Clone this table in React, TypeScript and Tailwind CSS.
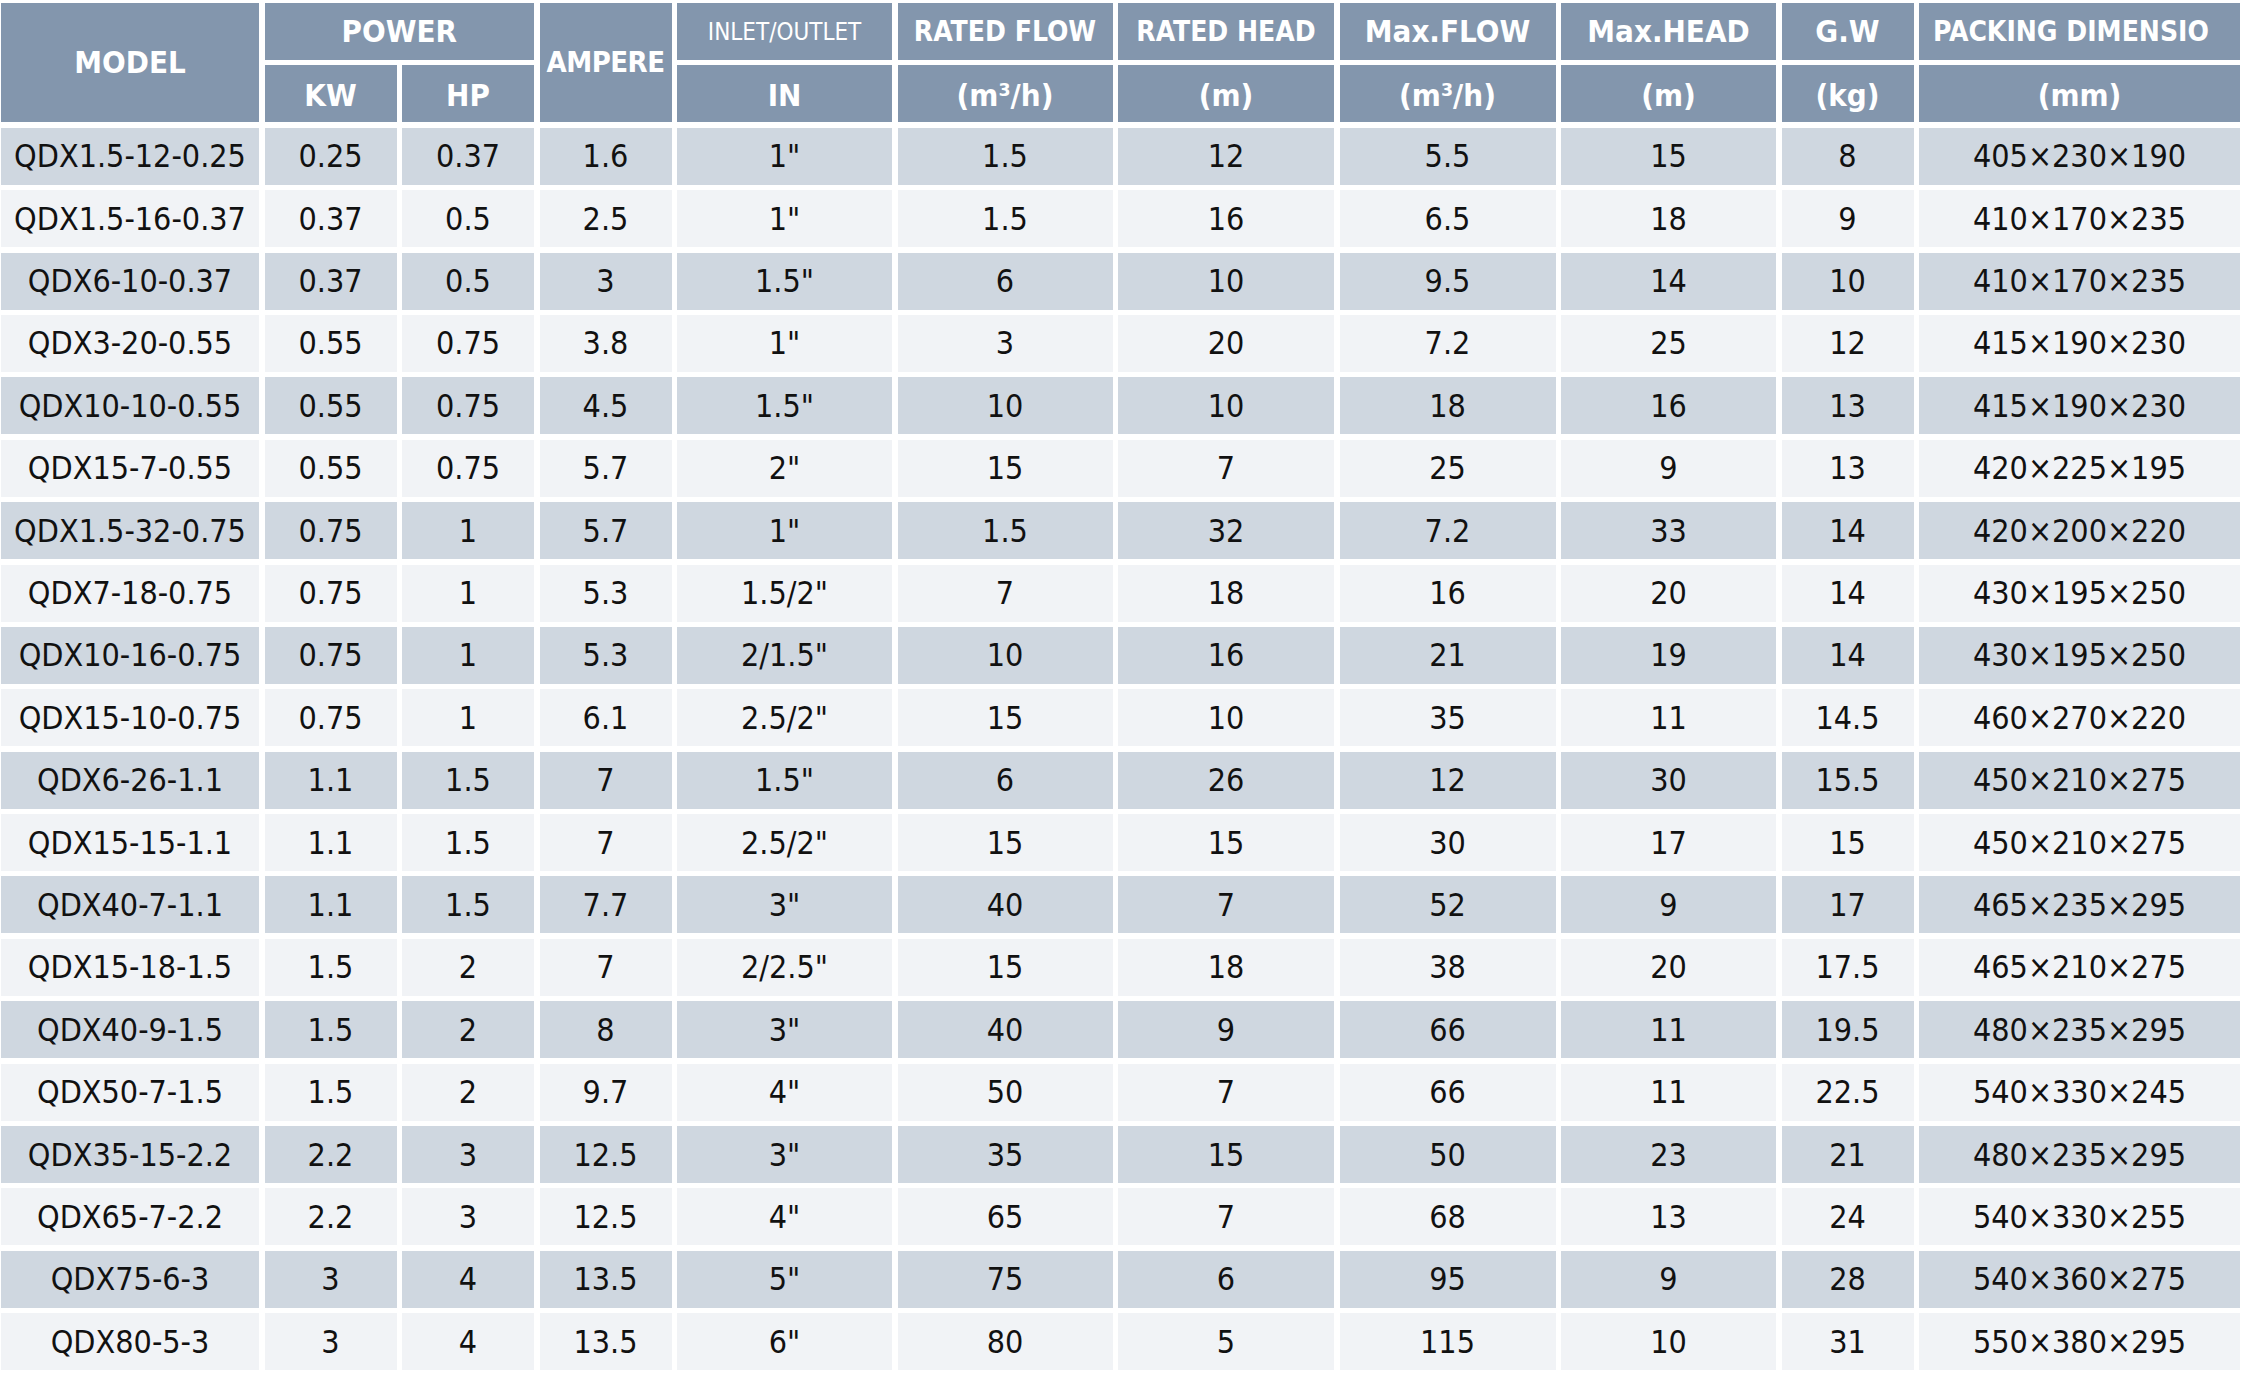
import React from "react";

const rows: string[][] = [
  ["QDX1.5-12-0.25", "0.25", "0.37", "1.6", '1"', "1.5", "12", "5.5", "15", "8", "405×230×190"],
  ["QDX1.5-16-0.37", "0.37", "0.5", "2.5", '1"', "1.5", "16", "6.5", "18", "9", "410×170×235"],
  ["QDX6-10-0.37", "0.37", "0.5", "3", '1.5"', "6", "10", "9.5", "14", "10", "410×170×235"],
  ["QDX3-20-0.55", "0.55", "0.75", "3.8", '1"', "3", "20", "7.2", "25", "12", "415×190×230"],
  ["QDX10-10-0.55", "0.55", "0.75", "4.5", '1.5"', "10", "10", "18", "16", "13", "415×190×230"],
  ["QDX15-7-0.55", "0.55", "0.75", "5.7", '2"', "15", "7", "25", "9", "13", "420×225×195"],
  ["QDX1.5-32-0.75", "0.75", "1", "5.7", '1"', "1.5", "32", "7.2", "33", "14", "420×200×220"],
  ["QDX7-18-0.75", "0.75", "1", "5.3", '1.5/2"', "7", "18", "16", "20", "14", "430×195×250"],
  ["QDX10-16-0.75", "0.75", "1", "5.3", '2/1.5"', "10", "16", "21", "19", "14", "430×195×250"],
  ["QDX15-10-0.75", "0.75", "1", "6.1", '2.5/2"', "15", "10", "35", "11", "14.5", "460×270×220"],
  ["QDX6-26-1.1", "1.1", "1.5", "7", '1.5"', "6", "26", "12", "30", "15.5", "450×210×275"],
  ["QDX15-15-1.1", "1.1", "1.5", "7", '2.5/2"', "15", "15", "30", "17", "15", "450×210×275"],
  ["QDX40-7-1.1", "1.1", "1.5", "7.7", '3"', "40", "7", "52", "9", "17", "465×235×295"],
  ["QDX15-18-1.5", "1.5", "2", "7", '2/2.5"', "15", "18", "38", "20", "17.5", "465×210×275"],
  ["QDX40-9-1.5", "1.5", "2", "8", '3"', "40", "9", "66", "11", "19.5", "480×235×295"],
  ["QDX50-7-1.5", "1.5", "2", "9.7", '4"', "50", "7", "66", "11", "22.5", "540×330×245"],
  ["QDX35-15-2.2", "2.2", "3", "12.5", '3"', "35", "15", "50", "23", "21", "480×235×295"],
  ["QDX65-7-2.2", "2.2", "3", "12.5", '4"', "65", "7", "68", "13", "24", "540×330×255"],
  ["QDX75-6-3", "3", "4", "13.5", '5"', "75", "6", "95", "9", "28", "540×360×275"],
  ["QDX80-5-3", "3", "4", "13.5", '6"', "80", "5", "115", "10", "31", "550×380×295"],
];

const head =
  "bg-[#8396ad] text-white flex items-center justify-center whitespace-nowrap overflow-hidden";

export default function App() {
  return (
    <div className="w-[2244px] h-[1374px] bg-white pt-[3px] pl-[1px] font-['DejaVu_Sans_Condensed','DejaVu_Sans',sans-serif] font-stretch-condensed">
      <div className="grid grid-cols-[258px_132px_132px_132px_215px_215px_216px_216px_215px_132px_321px] auto-rows-[57px] gap-x-[5.5px] gap-y-[5.4px]">
        <div className={`${head} font-bold row-span-2 text-[31px]`}>MODEL</div>
        <div className={`${head} font-bold col-span-2 text-[31px]`}>POWER</div>
        <div className={`${head} font-bold row-span-2 text-[29px] tracking-[-0.5px]`}>AMPERE</div>
        <div className={`${head} font-normal text-[24px]`}>INLET/OUTLET</div>
        <div className={`${head} font-bold text-[28px]`}>RATED FLOW</div>
        <div className={`${head} font-bold text-[28px]`}>RATED HEAD</div>
        <div className={`${head} font-bold text-[31px]`}>Max.FLOW</div>
        <div className={`${head} font-bold text-[31px]`}>Max.HEAD</div>
        <div className={`${head} font-bold text-[31px]`}>G.W</div>
        <div className={`${head} font-bold text-[28px] justify-start pl-[14px]`}>PACKING DIMENSIO</div>
        <div className={`${head} font-bold text-[31px] pt-[2px]`}>KW</div>
        <div className={`${head} font-bold text-[31px] pt-[2px]`}>HP</div>
        <div className={`${head} font-bold text-[31px] pt-[2px]`}>IN</div>
        <div className={`${head} font-bold text-[31px] pt-[2px]`}>(m³/h)</div>
        <div className={`${head} font-bold text-[31px] pt-[2px]`}>(m)</div>
        <div className={`${head} font-bold text-[31px] pt-[2px]`}>(m³/h)</div>
        <div className={`${head} font-bold text-[31px] pt-[2px]`}>(m)</div>
        <div className={`${head} font-bold text-[31px] pt-[2px]`}>(kg)</div>
        <div className={`${head} font-bold text-[31px] pt-[2px]`}>(mm)</div>
        {rows.map((r, i) =>
          r.map((c, j) => (
            <div
              key={`${i}-${j}`}
              className={`${i % 2 === 0 ? "bg-[#cfd7e0]" : "bg-[#f1f3f6]"} flex items-center justify-center whitespace-nowrap text-[32px] text-[#111111]`}
            >
              {c}
            </div>
          ))
        )}
      </div>
    </div>
  );
}
